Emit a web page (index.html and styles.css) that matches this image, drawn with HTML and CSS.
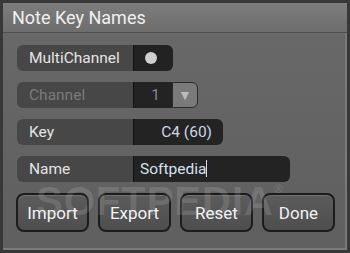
FILE: index.html
```html
<!DOCTYPE html>
<html lang="en">
<head>
    <meta charset="UTF-8">
    <title>Note Key Names</title>
    <link rel="stylesheet" href="styles.css">
</head>
<body>

    <div class="window">
        <div class="titlebar">Note Key Names</div>

        <div class="content">
            <div class="row">
                <div class="label">MultiChannel</div>
                <div class="toggle"><span class="knob"></span></div>
            </div>

            <div class="row disabled">
                <div class="label">Channel</div>
                <div class="value channel">1</div>
                <div class="dropdown">&#9660;</div>
            </div>

            <div class="row">
                <div class="label">Key</div>
                <div class="value key">C4 (60)</div>
            </div>

            <div class="row">
                <div class="label">Name</div>
                <div class="value name">Softpedia<span class="caret"></span></div>
            </div>

            <div class="buttons">
                <button>Import</button>
                <button>Export</button>
                <button>Reset</button>
                <button>Done</button>
            </div>
        </div>

        <div class="watermark">SOFTPEDIA<sup>&reg;</sup></div>
    </div>

</body>
</html>
```

FILE: styles.css
```css
body {
    margin: 0;
    background: #333;
    font-family: Roboto, "Noto Sans", sans-serif;
}
.window {
    position: relative;
    width: 350px;
    height: 253px;
    box-sizing: border-box;
    border: 3px solid #383838;
    background: linear-gradient(#696969, #5f5f5f);
    box-shadow: inset -2px -2px 0 #7a7a7a;
    overflow: hidden;
}
.titlebar {
    height: 29px;
    line-height: 29px;
    padding-left: 9px;
    font-size: 18px;
    color: #f0f0f0;
    background: linear-gradient(#7c7c7c, #6e6e6e);
    border-bottom: 1px solid #4e4e4e;
}
.content {
    padding: 12px 0 0 14px;
}
.row {
    display: flex;
    height: 26px;
    margin-bottom: 11px;
}
.label {
    width: 104px;
    padding-left: 12px;
    line-height: 26px;
    font-size: 15.5px;
    color: #e4e4e4;
    background: #474747;
    border-radius: 6px 0 0 6px;
}
.disabled .label {
    color: #7a7a7a;
}
.toggle {
    width: 39px;
    background: #222;
    border-left: 1px solid #111;
    border-radius: 0 6px 6px 0;
    display: flex;
    align-items: center;
    justify-content: center;
}
.knob {
    width: 12px;
    height: 12px;
    border-radius: 50%;
    background: #cfcfcf;
    margin-left: -5px;
}
.value {
    background: #232323;
    border-left: 1px solid #111;
    line-height: 26px;
    font-size: 15.5px;
    color: #cbd6e2;
    border-radius: 0 6px 6px 0;
    box-sizing: border-box;
}
.channel {
    width: 39px;
    text-align: right;
    padding-right: 12px;
    color: #7f8a96;
    border-radius: 0;
}
.dropdown {
    width: 24px;
    background: #7a7a7a;
    border: 1px solid #2a2a2a;
    border-radius: 0 6px 6px 0;
    color: #bcbcbc;
    font-size: 14px;
    line-height: 24px;
    text-align: center;
}
.key {
    width: 90px;
    text-align: right;
    padding-right: 11px;
}
.name {
    width: 157px;
    padding-left: 6px;
    color: #d6e0ec;
}
.caret {
    display: inline-block;
    width: 1px;
    height: 17px;
    background: #cfe0f5;
    vertical-align: -3px;
}
.buttons {
    display: flex;
    gap: 9px;
    margin: 2px 0 0 -1px;
}
.buttons button {
    width: 73px;
    height: 39px;
    border: 2px solid #1c1c1c;
    border-radius: 8px;
    background: linear-gradient(#5c5c5c, #4e4e4e);
    box-shadow: inset 0 1px 0 #707070;
    color: #f2f2f2;
    font-family: Roboto, "Noto Sans", sans-serif;
    font-size: 17px;
    padding: 0;
}
.watermark {
    position: absolute;
    left: 33px;
    top: 176px;
    font-family: "Liberation Sans", Arial, sans-serif;
    font-weight: bold;
    font-size: 40px;
    letter-spacing: 1px;
    color: rgba(255, 255, 255, 0.13);
    pointer-events: none;
}
.watermark sup {
    font-size: 12px;
    vertical-align: 22px;
}
```
